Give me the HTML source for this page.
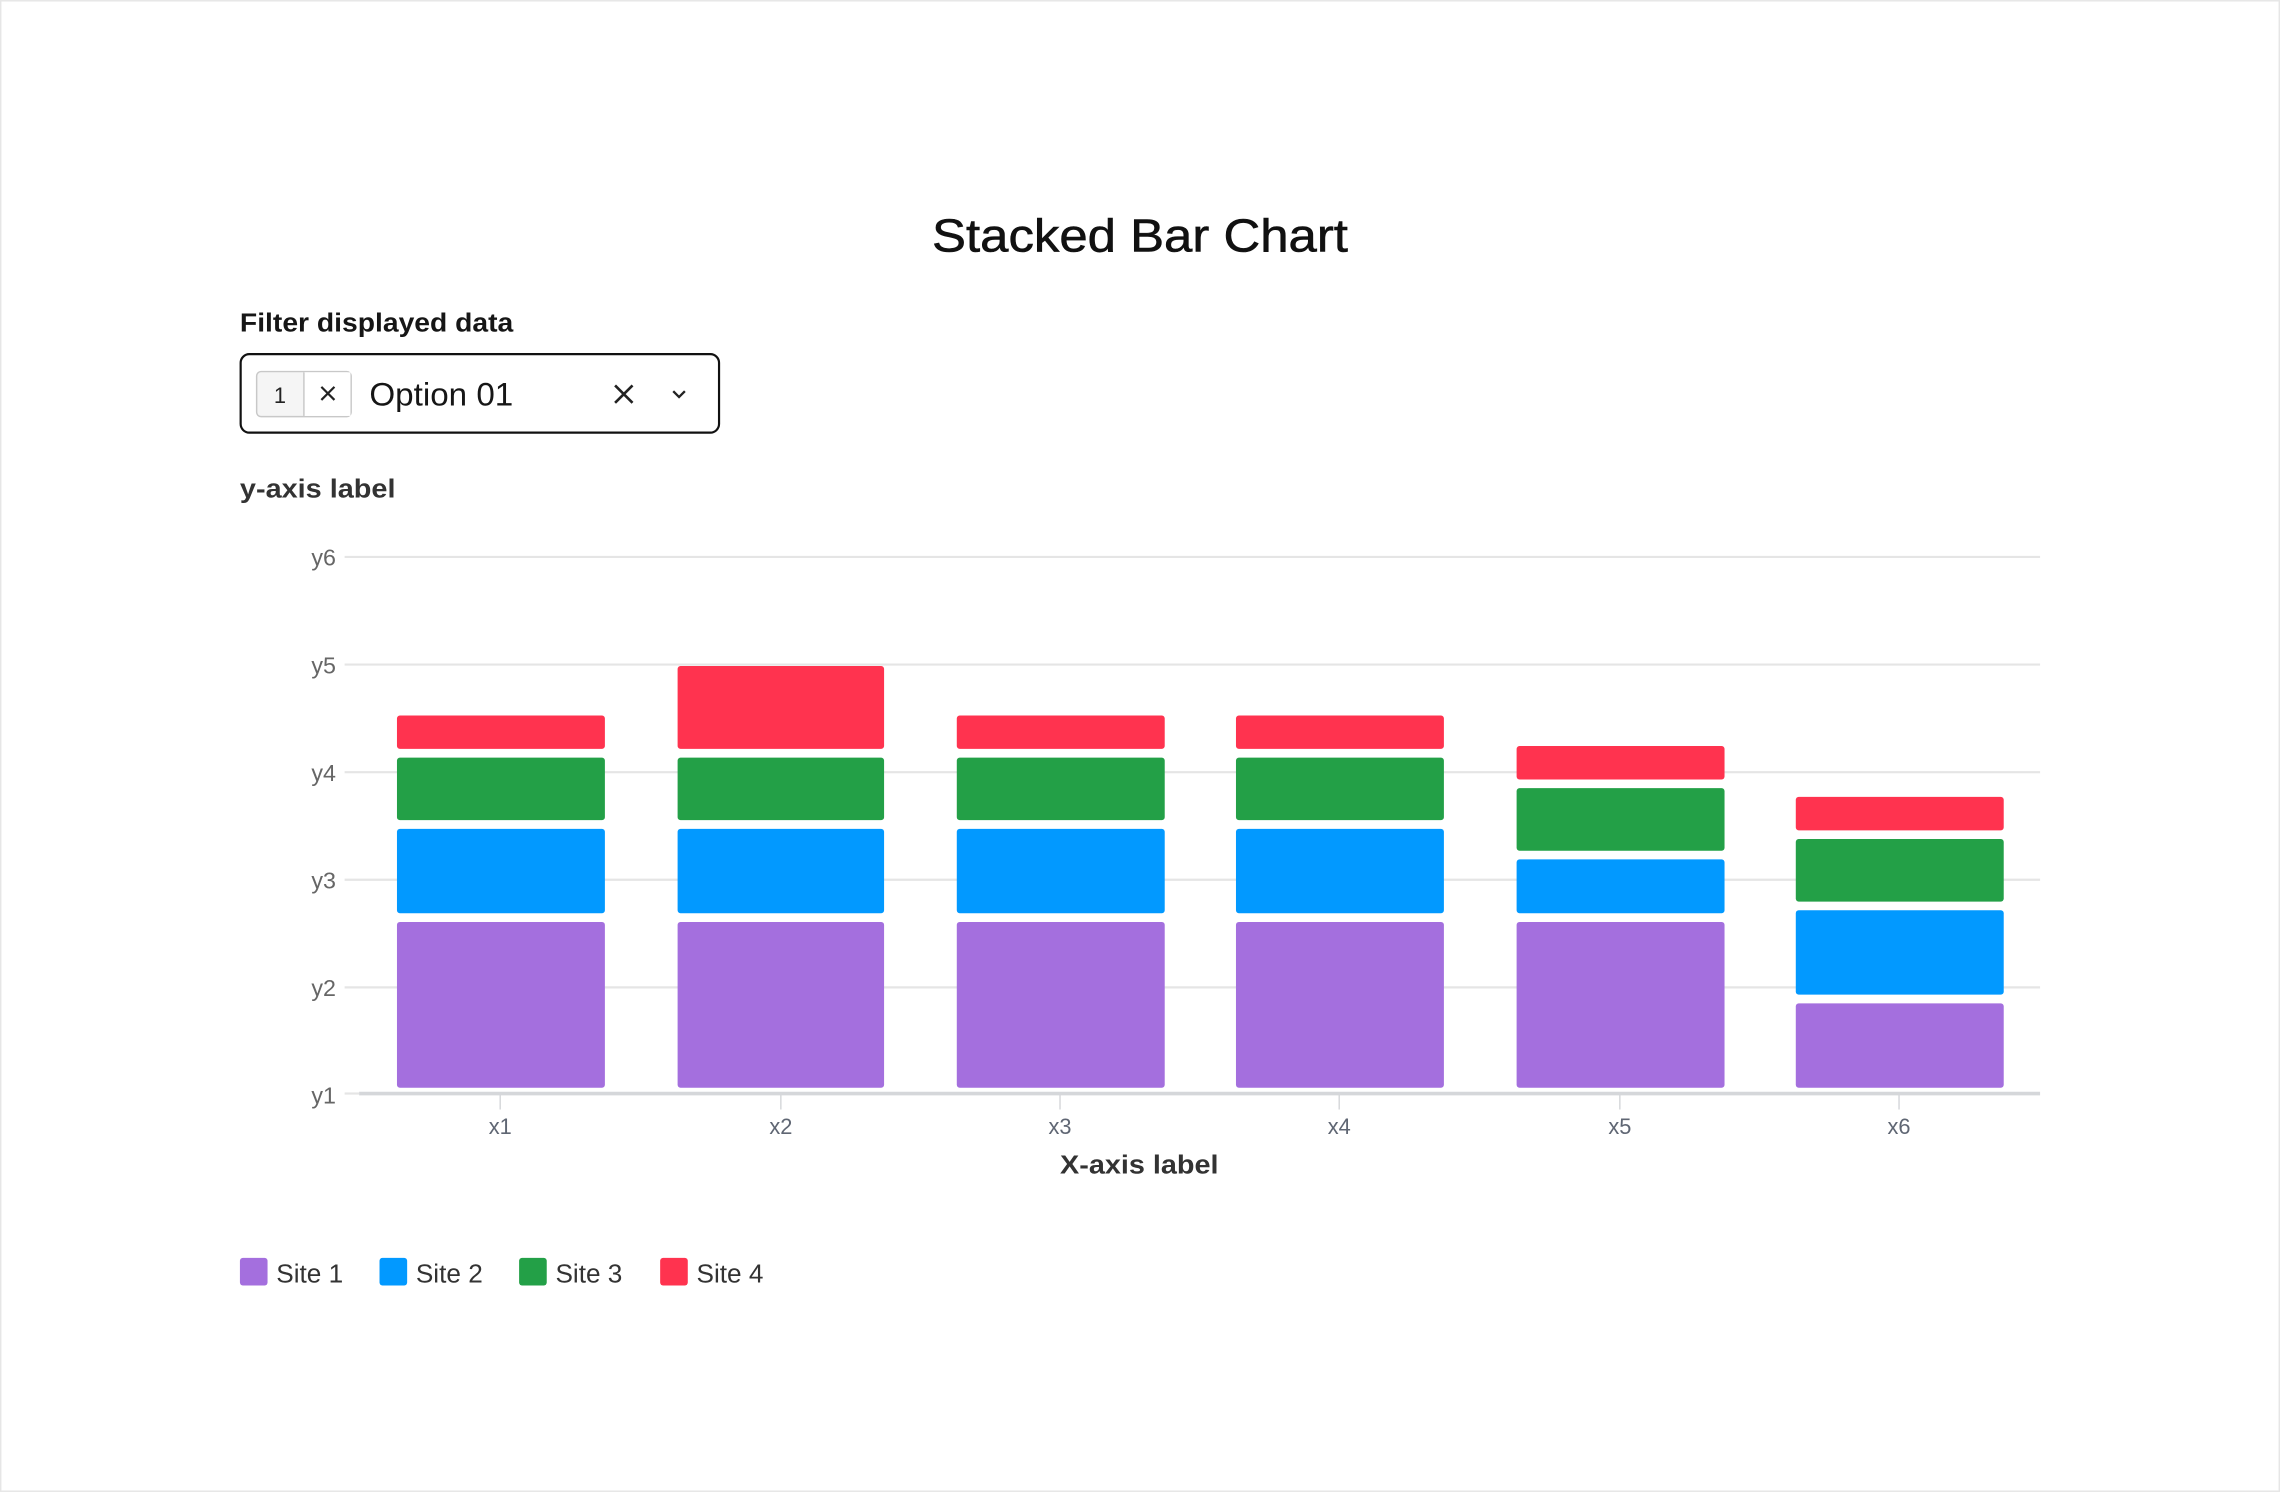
<!DOCTYPE html>
<html><head><meta charset="utf-8"><style>
html,body{margin:0;padding:0;background:#fff;}
svg{display:block;}
text{font-family:"Liberation Sans",sans-serif;}
</style></head><body>
<svg width="2280" height="1492" viewBox="0 0 1568 1026" xmlns="http://www.w3.org/2000/svg">
<rect x="0.5" y="0.5" width="1567" height="1025" fill="#fff" stroke="#e6e6e6"/>
<text x="641" y="173" font-size="32" fill="#111" textLength="286" lengthAdjust="spacingAndGlyphs" stroke="#111" stroke-width="0.4">Stacked Bar Chart</text>
<text x="165" y="228" font-size="18" font-weight="bold" fill="#161616" textLength="188" lengthAdjust="spacingAndGlyphs">Filter displayed data</text>
<rect x="165.5" y="243.5" width="329" height="54" rx="6" fill="#fff" stroke="#111" stroke-width="1.5"/>
<rect x="176.5" y="255.5" width="65" height="31" rx="3" fill="#f5f5f5" stroke="#c8c8c8"/>
<rect x="209" y="256" width="32" height="30" fill="#fff"/>
<line x1="209" y1="256" x2="209" y2="286" stroke="#c8c8c8"/>
<text x="192.5" y="277" text-anchor="middle" font-size="15" fill="#222">1</text>
<path d="M221 266 L230 275 M230 266 L221 275" stroke="#222" stroke-width="1.5"/>
<text x="254" y="279" font-size="22" fill="#161616" textLength="99" lengthAdjust="spacingAndGlyphs">Option 01</text>
<path d="M423 265 L435 277 M435 265 L423 277" stroke="#222" stroke-width="1.8"/>
<path d="M463 269 L467 273 L471 269" fill="none" stroke="#222" stroke-width="1.6"/>
<text x="165" y="342" font-size="18" font-weight="bold" fill="#333" textLength="107" lengthAdjust="spacingAndGlyphs">y-axis label</text>
<g stroke="#e5e5e5" stroke-width="1.5">
<line x1="237" y1="383" x2="1403" y2="383"/>
<line x1="237" y1="457" x2="1403" y2="457"/>
<line x1="237" y1="531" x2="1403" y2="531"/>
<line x1="237" y1="605" x2="1403" y2="605"/>
<line x1="237" y1="679" x2="1403" y2="679"/>
<line x1="237" y1="752" x2="247" y2="752"/>
</g>
<line x1="247" y1="752" x2="1403" y2="752" stroke="#d5d7da" stroke-width="2.5"/>
<g fill="#666" font-size="16" text-anchor="end">
<text x="231" y="389">y6</text><text x="231" y="463">y5</text><text x="231" y="537">y4</text>
<text x="231" y="611">y3</text><text x="231" y="685">y2</text><text x="231" y="759">y1</text>
</g>
<g stroke="#d5d7da" stroke-width="1">
<line x1="344" y1="753" x2="344" y2="763"/><line x1="537" y1="753" x2="537" y2="763"/>
<line x1="729" y1="753" x2="729" y2="763"/><line x1="921" y1="753" x2="921" y2="763"/>
<line x1="1114" y1="753" x2="1114" y2="763"/><line x1="1306" y1="753" x2="1306" y2="763"/>
</g>
<g fill="#5f6673" font-size="15" text-anchor="middle">
<text x="344" y="780">x1</text><text x="537" y="780">x2</text><text x="729" y="780">x3</text>
<text x="921" y="780">x4</text><text x="1114" y="780">x5</text><text x="1306" y="780">x6</text>
</g>
<text x="729" y="807" font-size="18" font-weight="bold" fill="#333" textLength="109" lengthAdjust="spacingAndGlyphs">X-axis label</text>
<g>
<rect x="273" y="492" width="143" height="23" rx="2" fill="#ff334f"/>
<rect x="273" y="521" width="143" height="43" rx="2" fill="#23a047"/>
<rect x="273" y="570" width="143" height="58" rx="2" fill="#0299ff"/>
<rect x="273" y="634" width="143" height="114" rx="2" fill="#a46fde"/>

<rect x="466" y="458" width="142" height="57" rx="2" fill="#ff334f"/>
<rect x="466" y="521" width="142" height="43" rx="2" fill="#23a047"/>
<rect x="466" y="570" width="142" height="58" rx="2" fill="#0299ff"/>
<rect x="466" y="634" width="142" height="114" rx="2" fill="#a46fde"/>

<rect x="658" y="492" width="143" height="23" rx="2" fill="#ff334f"/>
<rect x="658" y="521" width="143" height="43" rx="2" fill="#23a047"/>
<rect x="658" y="570" width="143" height="58" rx="2" fill="#0299ff"/>
<rect x="658" y="634" width="143" height="114" rx="2" fill="#a46fde"/>

<rect x="850" y="492" width="143" height="23" rx="2" fill="#ff334f"/>
<rect x="850" y="521" width="143" height="43" rx="2" fill="#23a047"/>
<rect x="850" y="570" width="143" height="58" rx="2" fill="#0299ff"/>
<rect x="850" y="634" width="143" height="114" rx="2" fill="#a46fde"/>

<rect x="1043" y="513" width="143" height="23" rx="2" fill="#ff334f"/>
<rect x="1043" y="542" width="143" height="43" rx="2" fill="#23a047"/>
<rect x="1043" y="591" width="143" height="37" rx="2" fill="#0299ff"/>
<rect x="1043" y="634" width="143" height="114" rx="2" fill="#a46fde"/>

<rect x="1235" y="548" width="143" height="23" rx="2" fill="#ff334f"/>
<rect x="1235" y="577" width="143" height="43" rx="2" fill="#23a047"/>
<rect x="1235" y="626" width="143" height="58" rx="2" fill="#0299ff"/>
<rect x="1235" y="690" width="143" height="58" rx="2" fill="#a46fde"/>
</g>
<g font-size="18" fill="#333">
<rect x="165" y="865" width="19" height="19" rx="2" fill="#a46fde"/><text x="190" y="882">Site 1</text>
<rect x="261" y="865" width="19" height="19" rx="2" fill="#0299ff"/><text x="286" y="882">Site 2</text>
<rect x="357" y="865" width="19" height="19" rx="2" fill="#23a047"/><text x="382" y="882">Site 3</text>
<rect x="454" y="865" width="19" height="19" rx="2" fill="#ff334f"/><text x="479" y="882">Site 4</text>
</g>
</svg>
</body></html>
